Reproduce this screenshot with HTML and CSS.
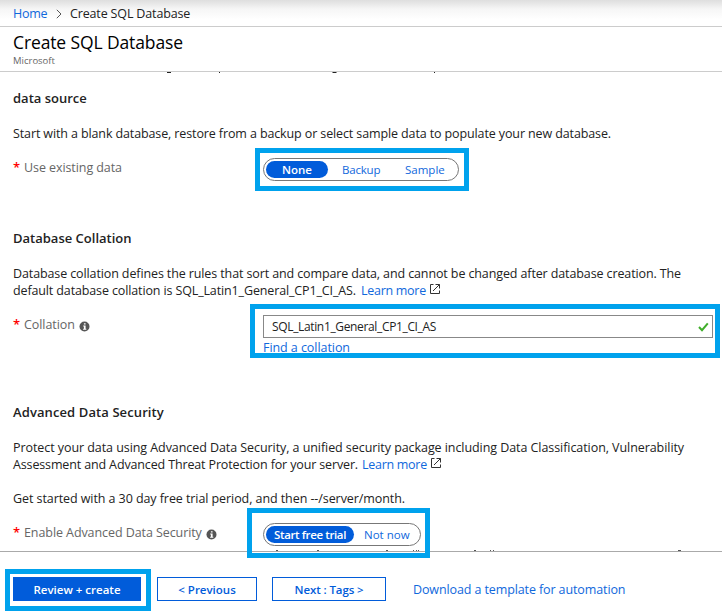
FILE: index.html
```
<!DOCTYPE html>
<html lang="en">
<head>
<meta charset="utf-8">
<title>Create SQL Database</title>
<link rel="stylesheet" href="styles.css">
</head>
<body>
<nav class="crumbs">
  <a class="crumb-home">Home</a>
  <svg class="chevron" width="6" height="10" viewBox="0 0 6 10"><path d="M.8.8 5 5 .8 9.2" fill="none" stroke="#555"/></svg>
  <span class="crumb-page">Create SQL Database</span>
</nav>
<header class="title-bar">
  <h1>Create SQL Database</h1>
  <p class="publisher">Microsoft</p>
</header>
<main class="content">
  <svg class="scrolled-line" width="460" height="1" viewBox="0 0 460 1"><path d="M154 .5h4M206 .5h1M319.500 .5h4M421 .5h1" stroke="#222"/></svg>

  <section class="source">
    <h2>data source</h2>
    <p class="copy l-start">Start with a blank database, restore from a backup or select sample data to populate your new database.</p>
    <div class="field">
      <div class="label"><b class="req">*</b><span>Use existing data</span></div>
      <div class="pill pill-source callout callout-source">
        <span class="opt on">None</span><span class="opt backup">Backup</span><span class="opt sample">Sample</span>
      </div>
    </div>
  </section>

  <section class="collation">
    <h2>Database Collation</h2>
    <p class="copy l-rules">Database collation defines the rules that sort and compare data, and cannot be changed after database creation. The</p>
    <p class="copy"><span class="l-default">default database collation is SQL_Latin1_General_CP1_CI_AS.</span><a class="learn">Learn more</a><svg class="ext" width="12" height="12" viewBox="0 0 12 12"><path d="M4.500 1.500h-3v9h9v-3M6.500 1.500h4v4M10.500 1.500 4 8" fill="none" stroke="#333"/></svg></p>
    <div class="field">
      <div class="label"><b class="req">*</b><span>Collation</span><svg class="info" width="11" height="11" viewBox="0 0 11 11"><circle cx="5.5" cy="5.5" r="5" fill="#555"/><path d="M4.900 2.200h1.700v1.400H4.900zM4.200 4.400h2.400v3.400h.7v1H4.100v-1h.8V5.400h-.7z" fill="#fff"/></svg></div>
      <div class="collation-control callout callout-collation">
        <div class="input"><span>SQL_Latin1_General_CP1_CI_AS</span><svg width="11" height="10" viewBox="0 0 11 10"><path d="M1 5 4 8.200 9.800 1.400" fill="none" stroke="#3fae2a" stroke-width="2"/></svg></div>
        <a class="find">Find a collation</a>
      </div>
    </div>
  </section>

  <section class="security">
    <h2 class="h-security">Advanced Data Security</h2>
    <p class="copy l-protect">Protect your data using Advanced Data Security, a unified security package including Data Classification, Vulnerability</p>
    <p class="copy"><span class="l-assess">Assessment and Advanced Threat Protection for your server.</span><a class="learn">Learn more</a><svg class="ext" width="12" height="12" viewBox="0 0 12 12"><path d="M4.500 1.500h-3v9h9v-3M6.500 1.500h4v4M10.500 1.500 4 8" fill="none" stroke="#333"/></svg></p>
    <p class="copy l-trial">Get started with a 30 day free trial period, and then --/server/month.</p>
    <div class="field">
      <div class="label"><b class="req">*</b><span>Enable Advanced Data Security</span><svg class="info" width="11" height="11" viewBox="0 0 11 11"><circle cx="5.5" cy="5.5" r="5" fill="#555"/><path d="M4.900 2.200h1.700v1.400H4.900zM4.200 4.400h2.400v3.400h.7v1H4.100v-1h.8V5.400h-.7z" fill="#fff"/></svg></div>
      <div class="pill pill-trial callout callout-trial">
        <span class="opt on">Start free trial</span><span class="opt later">Not now</span>
      </div>
    </div>
    <svg class="cut-line" width="459" height="1" viewBox="0 0 459 1"><path d="M13 .5h2M54 .5h2M123 .5h2M150 .5h1M153 .5h1M155 .5h1M211 .5h2M227 .5h1M230 .5h1M415 .5h3" stroke="#555"/></svg>
  </section>
</main>
<footer class="actions">
  <div class="btn primary callout callout-review">Review + create</div>
  <div class="btn previous">&lt; Previous</div>
  <div class="btn next">Next : Tags &gt;</div>
  <a class="download">Download a template for automation</a>
</footer>
</body>
</html>
```
FILE: styles.css
```
*, *::after { box-sizing: border-box; }
body {
  margin: 0;
  width: 722px;
  height: 616px;
  overflow: hidden;
  display: flex;
  flex-direction: column;
  background: #fff;
  color: #222;
  font: 12.5px/17px "Open Sans", "Noto Sans", sans-serif;
  white-space: nowrap;
}
h1, h2, p { margin: 0; }
a { color: #1068dc; }
svg { flex: none; display: block; }

.crumbs {
  height: 27px;
  flex: none;
  display: flex;
  align-items: center;
  padding: 1px 0 0 13px;
  border-bottom: 1px solid #ccc;
  background: linear-gradient(#dedede, #f6f6f6 35%, #fff 75%);
}
.crumb-home { width: 43px; letter-spacing: -.25px; }
.chevron { margin-right: 8px; }
.crumb-page { letter-spacing: -.15px; }

.title-bar {
  height: 45px;
  flex: none;
  padding: 3px 0 0 13px;
  border-bottom: 1px solid #ccc;
}
h1 { font-size: 17.5px; line-height: 25px; font-weight: 500; letter-spacing: -.12px; color: #000; }
.publisher { font-size: 9.5px; line-height: 12px; color: #666; }

.content { height: 479px; flex: none; padding-left: 13px; }

h2 { font-size: 13px; line-height: 17px; font-weight: 600; margin-bottom: 18px; }
.h-security { letter-spacing: .1px; }
.copy { height: 17px; display: flex; }
.source { padding-top: 17px; height: 157px; }
.collation { height: 174px; }
.l-start { letter-spacing: -.117px; }
.l-rules { letter-spacing: -.115px; }
.l-default { width: 348px; letter-spacing: -.13px; }
.l-protect { letter-spacing: -.067px; }
.l-assess { width: 349px; letter-spacing: -.14px; }
.l-trial { margin-top: 17px; letter-spacing: -.076px; }
.learn { width: 67px; letter-spacing: -.28px; }
.ext { margin: 1px 0 0 1px; }

.field { display: flex; height: 24px; margin-top: 16px; }
.label { width: 250px; height: 19px; display: flex; align-items: center; color: #666; letter-spacing: -.08px; }
.req { width: 11px; color: #f00; font-size: 13px; font-weight: 600; }
.info { margin: 3px 0 0 4px; }

.callout { position: relative; }
.callout::after { content: ""; position: absolute; border: 5px solid #00a2ed; z-index: 2; }
.callout-source::after { left: -9px; top: -11px; width: 214px; height: 43px; }
.callout-collation::after { left: -13px; top: -11px; width: 470px; height: 54px; }
.callout-trial::after { left: -17px; top: -16px; width: 183px; height: 50px; }
.callout-review::after { left: -9px; top: -9px; width: 146px; height: 42px; }

.pill {
  height: 23px;
  display: flex;
  align-items: center;
  padding: 0 2px;
  border: 1px solid #777;
  border-radius: 12px;
  font-size: 11.5px;
  color: #1068dc;
}
.pill-source { width: 196px; }
.pill-trial { width: 158px; }
.opt { height: 17px; line-height: 17px; }
.on { background: #015cda; color: #fff; font-weight: 600; border-radius: 9px; text-align: center; }
.pill-source .on { width: 62px; }
.pill-trial .on { width: 88px; letter-spacing: -.38px; }
.backup { margin-left: 14px; width: 63px; letter-spacing: -.2px; }
.later { margin-left: 10px; }

.collation-control { width: 450px; }
.input {
  height: 23px;
  border: 1px solid #888;
  padding: 0 3px 0 8px;
  display: flex;
  align-items: center;
  justify-content: space-between;
  font-size: 12px;
  letter-spacing: -.35px;
}
.find { display: block; line-height: 20px; letter-spacing: -.06px; }

.cut-line { margin: 3px 0 0 250px; }

.actions {
  height: 65px;
  flex: none;
  border-top: 1px solid #aaa;
  padding: 25px 0 0 13px;
  display: flex;
}
.btn {
  height: 24px;
  border: 1px solid #015cda;
  color: #015cda;
  font-size: 11.5px;
  font-weight: 600;
  line-height: 23px;
  text-align: center;
}
.primary { width: 128px; background: #015cda; color: #fff; }
.previous { width: 100px; margin-left: 16px; }
.next { width: 114px; margin-left: 15px; letter-spacing: -.1px; }
.download { margin-left: 27px; line-height: 25px; letter-spacing: -.11px; }
```
